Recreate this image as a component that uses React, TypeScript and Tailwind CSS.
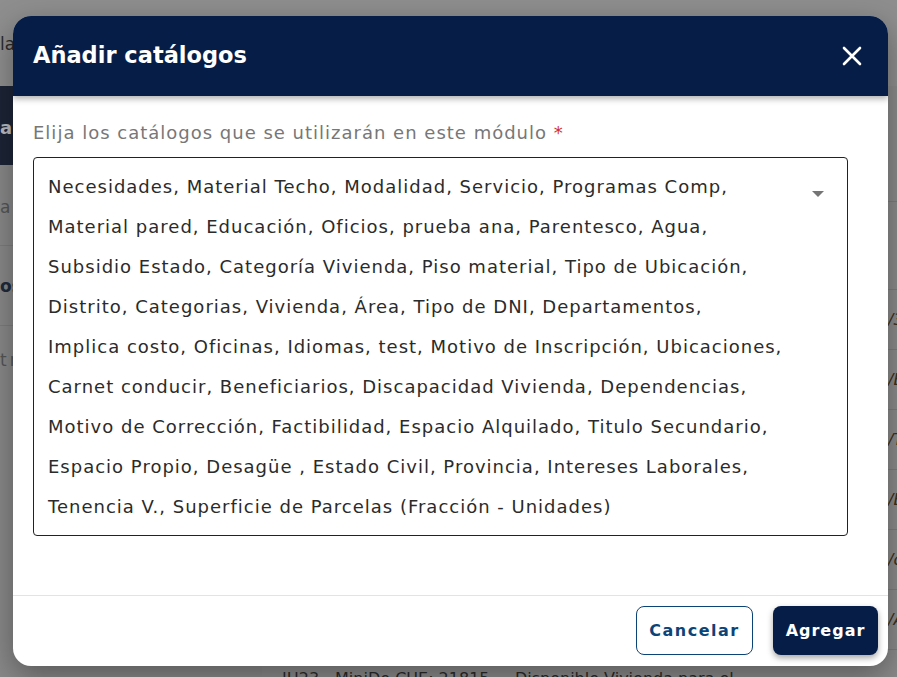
import React from "react";

const lines = [
  "Necesidades, Material Techo, Modalidad, Servicio, Programas Comp,",
  "Material pared, Educación, Oficios, prueba ana, Parentesco, Agua,",
  "Subsidio Estado, Categoría Vivienda, Piso material, Tipo de Ubicación,",
  "Distrito, Categorias, Vivienda, Área, Tipo de DNI, Departamentos,",
  "Implica costo, Oficinas, Idiomas, test, Motivo de Inscripción, Ubicaciones,",
  "Carnet conducir, Beneficiarios, Discapacidad Vivienda, Dependencias,",
  "Motivo de Corrección, Factibilidad, Espacio Alquilado, Titulo Secundario,",
  "Espacio Propio, Desagüe , Estado Civil, Provincia, Intereses Laborales,",
  "Tenencia V., Superficie de Parcelas (Fracción - Unidades)",
];

const font = { fontFamily: '"DejaVu Sans", "Noto Sans", sans-serif' };

export default function App() {
  return (
    <div
      className="relative w-[897px] h-[677px] overflow-hidden bg-[#8d8d8d]"
      style={font}
    >
      {/* Background page (dimmed) */}
      <div className="absolute inset-0 flex flex-col overflow-hidden">
        <div className="h-[86px] shrink-0 bg-[#8e8e8e] text-[#2a2a2a] text-[17px] pt-[32px]">
          la
        </div>
        <div className="flex flex-1 min-h-0">
          <div className="w-[262px] flex flex-col">
            <div className="h-[79px] shrink-0 bg-[#1c2436] text-[#b8bcc4] text-[18px] font-bold pt-[28px]">a</div>
            <div className="h-[81px] shrink-0 bg-[#888888] text-[#555] text-[17px] pt-[30px] border-b border-[#7c7c7c]">a</div>
            <div className="h-[80px] shrink-0 bg-[#888888] text-[#1f2a3a] text-[17px] font-bold pt-[28px] border-b border-[#7c7c7c]">os</div>
            <div className="flex-1 bg-[#888888] text-[#555] text-[17px] pt-[22px] tracking-[3px]">tr</div>
          </div>
          <div className="flex-1 bg-[#8a8a8a] flex flex-col">
            <div className="h-[116px] shrink-0 border-b border-[#7c7c7c]"></div>
            <div className="h-[88px] shrink-0 border-b border-[#7c7c7c]"></div>
            {["/3", "/E", "/T", "/E", "/c", "/A"].map((t, i) => (
              <div
                key={i}
                className="h-[60px] shrink-0 border-b border-[#7c7c7c] flex items-center justify-end text-[16px] text-[#3a2f20] italic"
              >
                <span className="w-[9px] overflow-hidden whitespace-nowrap">{t}</span>
              </div>
            ))}
            <div className="shrink-0 pl-[20px] pt-[19px] text-[16px] leading-[20px] text-[#2a2a2a] whitespace-nowrap">
              IH23 - MiniDe CUE: 21815 ... Disponible Vivienda para el ...
            </div>
          </div>
        </div>
      </div>

      {/* Modal */}
      <div className="absolute left-[13px] top-[16px] w-[875px] h-[650px] bg-white rounded-[18px] shadow-[0_10px_30px_rgba(0,0,0,0.35)] flex flex-col overflow-hidden">
        <div className="h-[80px] shrink-0 bg-[#061e47] flex items-center justify-between px-[20px] shadow-[0_3px_6px_rgba(0,0,0,0.3)] relative z-10">
          <div className="text-white text-[22.5px] font-bold">Añadir catálogos</div>
          <svg width="20" height="20" viewBox="0 0 20 20" className="mr-[6px]">
            <path d="M2 2 L18 18 M18 2 L2 18" stroke="white" strokeWidth="2.6" strokeLinecap="round" />
          </svg>
        </div>
        <div className="flex-1 px-[20px] pt-[25px]">
          <div className="text-[18px] leading-[24px] tracking-[1px] text-[#777777] whitespace-nowrap">
            Elija los catálogos que se utilizarán en este módulo <span className="text-[#d32f2f]">*</span>
          </div>
          <div className="mt-[12px] w-[815px] border border-[#222] rounded-[4px] pl-[14px] pt-[9px] pb-[8px] relative">
            {lines.map((l, i) => (
              <div key={i} className="h-[40px] leading-[40px] text-[18px] tracking-[1px] text-[#2b2b2b] whitespace-nowrap">
                {l}
              </div>
            ))}
            <svg width="12" height="6" viewBox="0 0 12 6" className="absolute left-[778px] top-[33px]">
              <path d="M0 0 L12 0 L6 6 Z" fill="#757575" />
            </svg>
          </div>
        </div>
        <div className="h-[71px] shrink-0 border-t border-[#e3e3e3] flex items-start justify-end gap-[20px] pt-[10px] pr-[10px]">
          <button className="h-[49px] w-[117px] rounded-[8px] border border-[#0d4478] text-[#0d4478] text-[16px] font-semibold tracking-[1.5px] bg-white">
            Cancelar
          </button>
          <button className="h-[49px] w-[105px] rounded-[8px] bg-[#061e47] text-white text-[16px] font-semibold tracking-[1px] shadow-[0_3px_6px_rgba(0,0,0,0.35)]">
            Agregar
          </button>
        </div>
      </div>
    </div>
  );
}
